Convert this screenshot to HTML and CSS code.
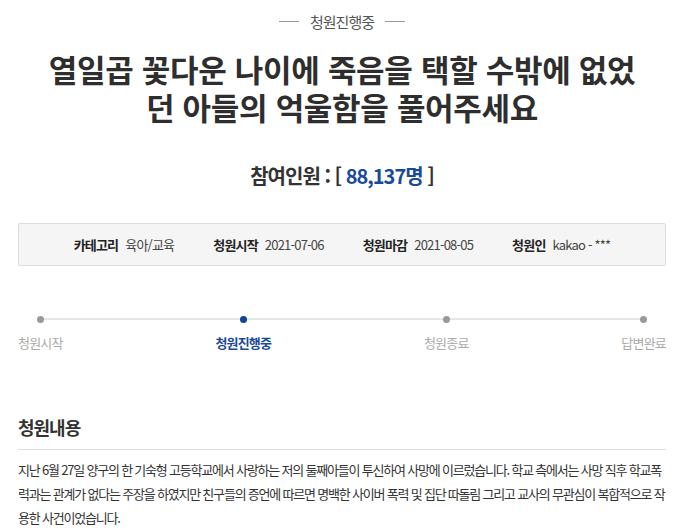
FILE: index.html
```html
<!DOCTYPE html>
<html lang="ko">
<head>
    <meta charset="UTF-8">
    <meta name="viewport" content="width=device-width, initial-scale=1.0">
    <title>청원진행중</title>
    <link rel="stylesheet" href="styles.css">
</head>
<body>
    <div class="wrap">
        <div class="status"><span>청원진행중</span></div>
        <h1 class="title">열일곱 꽃다운 나이에 죽음을 택할 수밖에 없었던 아들의 억울함을 풀어주세요</h1>
        <p class="count">참여인원 : [ <span class="num">88,137명</span> ]</p>

        <ul class="info">
            <li><strong>카테고리</strong>육아/교육</li>
            <li><strong>청원시작</strong>2021-07-06</li>
            <li><strong>청원마감</strong>2021-08-05</li>
            <li><strong>청원인</strong>kakao - ***</li>
        </ul>

        <ol class="steps">
            <li>청원시작</li>
            <li class="on">청원진행중</li>
            <li>청원종료</li>
            <li>답변완료</li>
        </ol>

        <h3 class="sub">청원내용</h3>
        <div class="content">
            지난 6월 27일 양구의 한 기숙형 고등학교에서 사랑하는 저의 둘째아들이 투신하여 사망에 이르렀습니다. 학교 측에서는 사망 직후 학교폭력과는 관계가 없다는 주장을 하였지만 친구들의 증언에 따르면 명백한 사이버 폭력 및 집단 따돌림 그리고 교사의 무관심이 복합적으로 작용한 사건이었습니다.
        </div>
    </div>
</body>
</html>
```

FILE: styles.css
```css
body {
    margin: 0;
    font-family: "Noto Sans CJK KR", "Noto Sans", sans-serif;
    color: #333;
    background: #fff;
}
.wrap {
    width: 648px;
    margin-left: 18px;
}
.status {
    display: flex;
    justify-content: center;
    align-items: center;
    gap: 11px;
    height: 42px;
    font-size: 15px;
    letter-spacing: -1px;
    color: #555;
}
.status::before,
.status::after {
    content: "";
    width: 20px;
    height: 1px;
    background: #999;
}
.title {
    margin: 8px 0 0;
    padding: 0 24px;
    font-size: 31px;
    line-height: 38px;
    letter-spacing: -0.3px;
    text-align: center;
    word-break: break-all;
    color: #2e2e2e;
}
.count {
    margin: 36px 0 0;
    text-align: center;
    font-size: 20px;
    font-weight: bold;
    letter-spacing: -1px;
    line-height: 28px;
}
.count .num {
    color: #184a97;
}
.info {
    list-style: none;
    margin: 33px 0 0;
    padding: 0;
    height: 41px;
    display: flex;
    justify-content: center;
    align-items: center;
    gap: 39px;
    background: #f5f5f5;
    border: 1px solid #ddd;
    border-radius: 2px;
    font-size: 13px;
    letter-spacing: -0.8px;
    color: #444;
}
.info strong {
    margin-right: 7px;
    color: #222;
}
.steps {
    list-style: none;
    margin: 43px 0 0;
    padding: 0;
    display: flex;
    justify-content: space-between;
    position: relative;
    font-size: 13px;
    letter-spacing: -0.8px;
    color: #aaa;
}
.steps::before {
    content: "";
    position: absolute;
    left: 21px;
    right: 21px;
    top: 9px;
    height: 2px;
    background: #e6e6e6;
}
.steps li {
    position: relative;
    display: flex;
    flex-direction: column;
    align-items: center;
    gap: 10px;
}
.steps li::before {
    content: "";
    width: 7px;
    height: 7px;
    margin-top: 7px;
    border-radius: 50%;
    background: #999;
}
.steps li.on {
    color: #1a4a96;
    font-weight: bold;
}
.steps li.on::before {
    background: #0f4599;
}
.sub {
    margin: 61px 0 0;
    padding-bottom: 8px;
    border-bottom: 1px solid #ddd;
    font-size: 18px;
    letter-spacing: -1px;
    line-height: 28px;
}
.content {
    margin-top: 8px;
    font-size: 13px;
    line-height: 24px;
    letter-spacing: -1.2px;
    word-break: break-all;
    text-wrap: pretty;
    color: #333;
}
```
